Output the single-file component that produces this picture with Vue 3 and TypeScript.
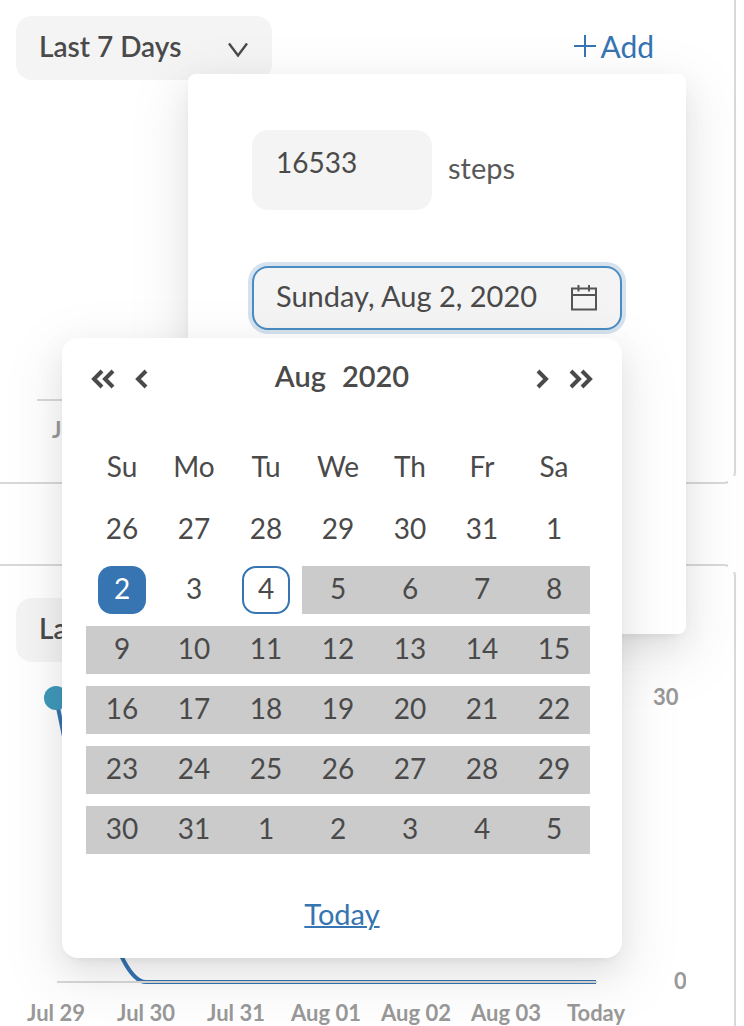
<script setup lang="ts">
import { computed, ref } from 'vue'

interface Day {
  label: number
  state: 'plain' | 'selected' | 'today' | 'disabled'
}

const range = ref('Last 7 Days')
const activityRange = ref('Last 7 Days')
const steps = ref('16533')
const date = ref('Sunday, Aug 2, 2020')

const weekdays = ['Su', 'Mo', 'Tu', 'We', 'Th', 'Fr', 'Sa']
const axisLabels = ['Jul 29', 'Jul 30', 'Jul 31', 'Aug 01', 'Aug 02', 'Aug 03', 'Today']

const weeks = computed<Day[][]>(() => {
  const first = new Date(2020, 6, 26)
  return Array.from({ length: 6 }, (_, week) =>
    Array.from({ length: 7 }, (_, weekday): Day => {
      const index = week * 7 + weekday
      const day = new Date(first.getFullYear(), first.getMonth(), first.getDate() + index)
      let state: Day['state'] = 'plain'
      if (index === 7) state = 'selected'
      else if (index === 9) state = 'today'
      else if (index > 9) state = 'disabled'
      return { label: day.getDate(), state }
    }),
  )
})
</script>

<template>
  <main class="page">
    <section class="card card-steps">
      <header class="toolbar">
        <div class="range">
          <select v-model="range" aria-label="Steps range">
            <option>Last 7 Days</option>
          </select>
          <svg class="caret" width="20" height="16" viewBox="0 0 20 16" aria-hidden="true">
            <path d="M1 1.5L10 13.5L19 1.5" />
          </svg>
        </div>
        <button class="add" type="button">
          <svg width="22" height="22" viewBox="0 0 22 22" aria-hidden="true">
            <path d="M11 0V22M0 11H22" />
          </svg>
          <span>Add</span>
        </button>
      </header>

      <svg class="chart" width="670" height="402" viewBox="0 0 670 402" aria-hidden="true">
        <path class="axis" d="M21 320H560" />
        <text x="36" y="358">Jul 29</text>
      </svg>

      <form class="popover" @submit.prevent>
        <div class="steps-row">
          <input id="steps" v-model="steps" class="steps-input" type="text" />
          <label for="steps">steps</label>
        </div>

        <div class="date-field">
          <div class="date-box">
            <input v-model="date" type="text" aria-label="Date" />
            <svg width="26" height="26" viewBox="0 0 26 26" aria-hidden="true">
              <path d="M1 3.5H25V24.5H1ZM1 10H25M7.5 0V6.5M18 0V6.5" />
            </svg>
          </div>

          <div class="calendar" role="dialog" aria-label="Choose date">
            <div class="calendar-head">
              <div class="nav">
                <button type="button" aria-label="Previous year">
                  <svg width="26" height="20" viewBox="0 0 26 20">
                    <path d="M12 2L4 10L12 18M23 2L15 10L23 18" />
                  </svg>
                </button>
                <button type="button" aria-label="Previous month">
                  <svg width="14" height="20" viewBox="0 0 14 20"><path d="M12 2L4 10L12 18" /></svg>
                </button>
              </div>
              <div class="title">
                <button type="button">Aug</button>
                <button type="button">2020</button>
              </div>
              <div class="nav">
                <button type="button" aria-label="Next month">
                  <svg width="14" height="20" viewBox="0 0 14 20"><path d="M2 2L10 10L2 18" /></svg>
                </button>
                <button type="button" aria-label="Next year">
                  <svg width="26" height="20" viewBox="0 0 26 20">
                    <path d="M3 2L11 10L3 18M14 2L22 10L14 18" />
                  </svg>
                </button>
              </div>
            </div>

            <table>
              <thead>
                <tr>
                  <th v-for="name in weekdays" :key="name" scope="col">{{ name }}</th>
                </tr>
              </thead>
              <tbody>
                <tr v-for="(week, w) in weeks" :key="w">
                  <td v-for="(day, d) in week" :key="d" :class="day.state">
                    <button type="button" :disabled="day.state === 'disabled'">{{ day.label }}</button>
                  </td>
                </tr>
              </tbody>
            </table>

            <footer class="calendar-foot">
              <a href="#today">Today</a>
            </footer>
          </div>
        </div>
      </form>
    </section>

    <section class="card card-activity">
      <header class="toolbar">
        <div class="range">
          <select v-model="activityRange" aria-label="Activity range">
            <option>Last 7 Days</option>
          </select>
          <svg class="caret" width="20" height="16" viewBox="0 0 20 16" aria-hidden="true">
            <path d="M1 1.5L10 13.5L19 1.5" />
          </svg>
        </div>
      </header>

      <svg class="chart" width="670" height="364" viewBox="0 0 670 364" role="img" aria-label="Activity">
        <path class="series" d="M40 36C70 180 97 320 130 320H580" />
        <circle cx="40" cy="36" r="12" />
        <path class="axis" d="M41 320H581" />
        <text x="637" y="43">30</text>
        <text x="658" y="327">0</text>
        <text
          v-for="(label, i) in axisLabels"
          :key="label"
          class="tick"
          :x="40 + i * 90"
          y="359"
        >{{ label }}</text>
      </svg>
    </section>
  </main>
</template>

<style>
body {
  background: #fff;
}
</style>

<style scoped>
.page {
  font-family: Lato, 'Liberation Sans', sans-serif;
  font-size: 28px;
  line-height: 36px;
  color: #4a4a4a;
  display: flex;
  flex-direction: column;
  gap: 80px;
  padding-right: 8px;
  overflow: hidden;
}

.page * {
  box-sizing: border-box;
}

button,
input,
select {
  font: inherit;
  color: inherit;
  border: 0;
  padding: 0;
  margin: 0;
  background: none;
  outline: 0;
}

.card {
  position: relative;
  border: 2px solid #d9d9d9;
  border-left: 0;
  padding-left: 16px;
  background: #fff;
}

.card-steps {
  border-top: 0;
  border-bottom-right-radius: 12px;
  padding-top: 16px;
  z-index: 1;
  background: none;
}

.card-activity {
  border-bottom: 0;
  border-top-right-radius: 12px;
  padding-top: 32px;
}

.card::after {
  content: '';
  position: absolute;
  right: -3px;
  width: 9px;
  height: 9px;
  background: #fff;
}

.card-steps::after {
  bottom: -3px;
}

.card-activity::after {
  top: -3px;
}

.toolbar {
  display: flex;
  align-items: center;
  justify-content: space-between;
  padding-right: 80px;
}

.range {
  position: relative;
  width: 256px;
  height: 64px;
}

.range select {
  appearance: none;
  width: 100%;
  height: 64px;
  padding: 0 48px 4px 23px;
  border-radius: 16px;
  background: #f4f4f4;
  font-weight: 600;
}

.caret {
  position: absolute;
  right: 24px;
  top: 26px;
  fill: none;
  stroke: #4a4a4a;
  stroke-width: 2.4;
  pointer-events: none;
}

.add {
  display: flex;
  align-items: center;
  gap: 4px;
  font-size: 30px;
  color: #3674b2;
  padding-bottom: 4px;
}

.add svg {
  fill: none;
  stroke: #3674b2;
  stroke-width: 2;
}

.chart {
  display: block;
  overflow: hidden;
}

.chart text {
  font-size: 22px;
  font-weight: 700;
  fill: #999;
}

.chart .tick {
  text-anchor: middle;
}

.chart circle {
  fill: #4099bb;
}

.axis {
  fill: none;
  stroke: #d9d9d9;
  stroke-width: 2;
}

.series {
  fill: none;
  stroke: #3674b2;
  stroke-width: 4;
}

.popover,
.calendar {
  position: absolute;
  background: #fff;
  box-shadow:
    0 6px 12px -8px rgba(0, 0, 0, 0.12),
    0 12px 32px rgba(0, 0, 0, 0.08),
    0 18px 56px 16px rgba(0, 0, 0, 0.05);
}

.popover {
  z-index: 2;
  top: 74px;
  right: 48px;
  width: 498px;
  min-height: 560px;
  padding: 56px 64px;
  border-radius: 8px;
}

.steps-row {
  display: flex;
  align-items: center;
  gap: 16px;
  margin-bottom: 56px;
}

.steps-input {
  width: 180px;
  height: 80px;
  padding: 0 24px 16px;
  border-radius: 16px;
  background: #f4f4f4;
}

.steps-row label {
  padding-bottom: 4px;
  font-size: 29px;
  color: #595959;
}

.date-field {
  position: relative;
}

.date-box {
  display: flex;
  align-items: center;
  height: 64px;
  padding: 0 23px 0 22px;
  border: 2px solid #4a8dc3;
  border-radius: 16px;
  background: #f4f4f4;
  box-shadow: 0 0 0 4px #d6e2ee;
}

.date-box input {
  flex: 1;
  min-width: 0;
  padding-bottom: 4px;
  font-size: 29px;
}

.date-box svg {
  flex: none;
  fill: none;
  stroke: #555;
  stroke-width: 2;
}

.calendar {
  top: 72px;
  right: 0;
  width: 560px;
  border-radius: 16px;
}

.calendar-head {
  display: flex;
  align-items: center;
  justify-content: space-between;
  height: 80px;
  padding: 0 28px;
}

.nav {
  display: flex;
  gap: 18px;
}

.nav button {
  display: flex;
  padding-top: 2px;
}

.nav svg {
  fill: none;
  stroke: #4a4a4a;
  stroke-width: 4;
}

.title {
  display: flex;
  gap: 16px;
  padding-bottom: 4px;
  font-size: 29px;
  font-weight: 600;
}

table {
  width: 504px;
  margin: 16px 24px;
  border-collapse: collapse;
  table-layout: fixed;
  text-align: center;
}

th {
  height: 66px;
  padding: 0 0 2px;
  font-weight: 400;
}

td {
  height: 60px;
  padding: 6px 0;
}

td button {
  display: block;
  width: 48px;
  height: 48px;
  margin: 0 auto;
  padding-bottom: 4px;
  border-radius: 14px;
}

.selected button {
  background: #3674b2;
  color: #fff;
}

.today button {
  border: 2px solid #3674b2;
}

.disabled button {
  width: 100%;
  border-radius: 0;
  background: #cbcbcb;
}

.calendar-foot {
  display: flex;
  align-items: center;
  justify-content: center;
  height: 82px;
  padding-bottom: 6px;
}

.calendar-foot a {
  font-size: 29px;
  color: #3674b2;
  text-decoration-thickness: 2px;
}
</style>
